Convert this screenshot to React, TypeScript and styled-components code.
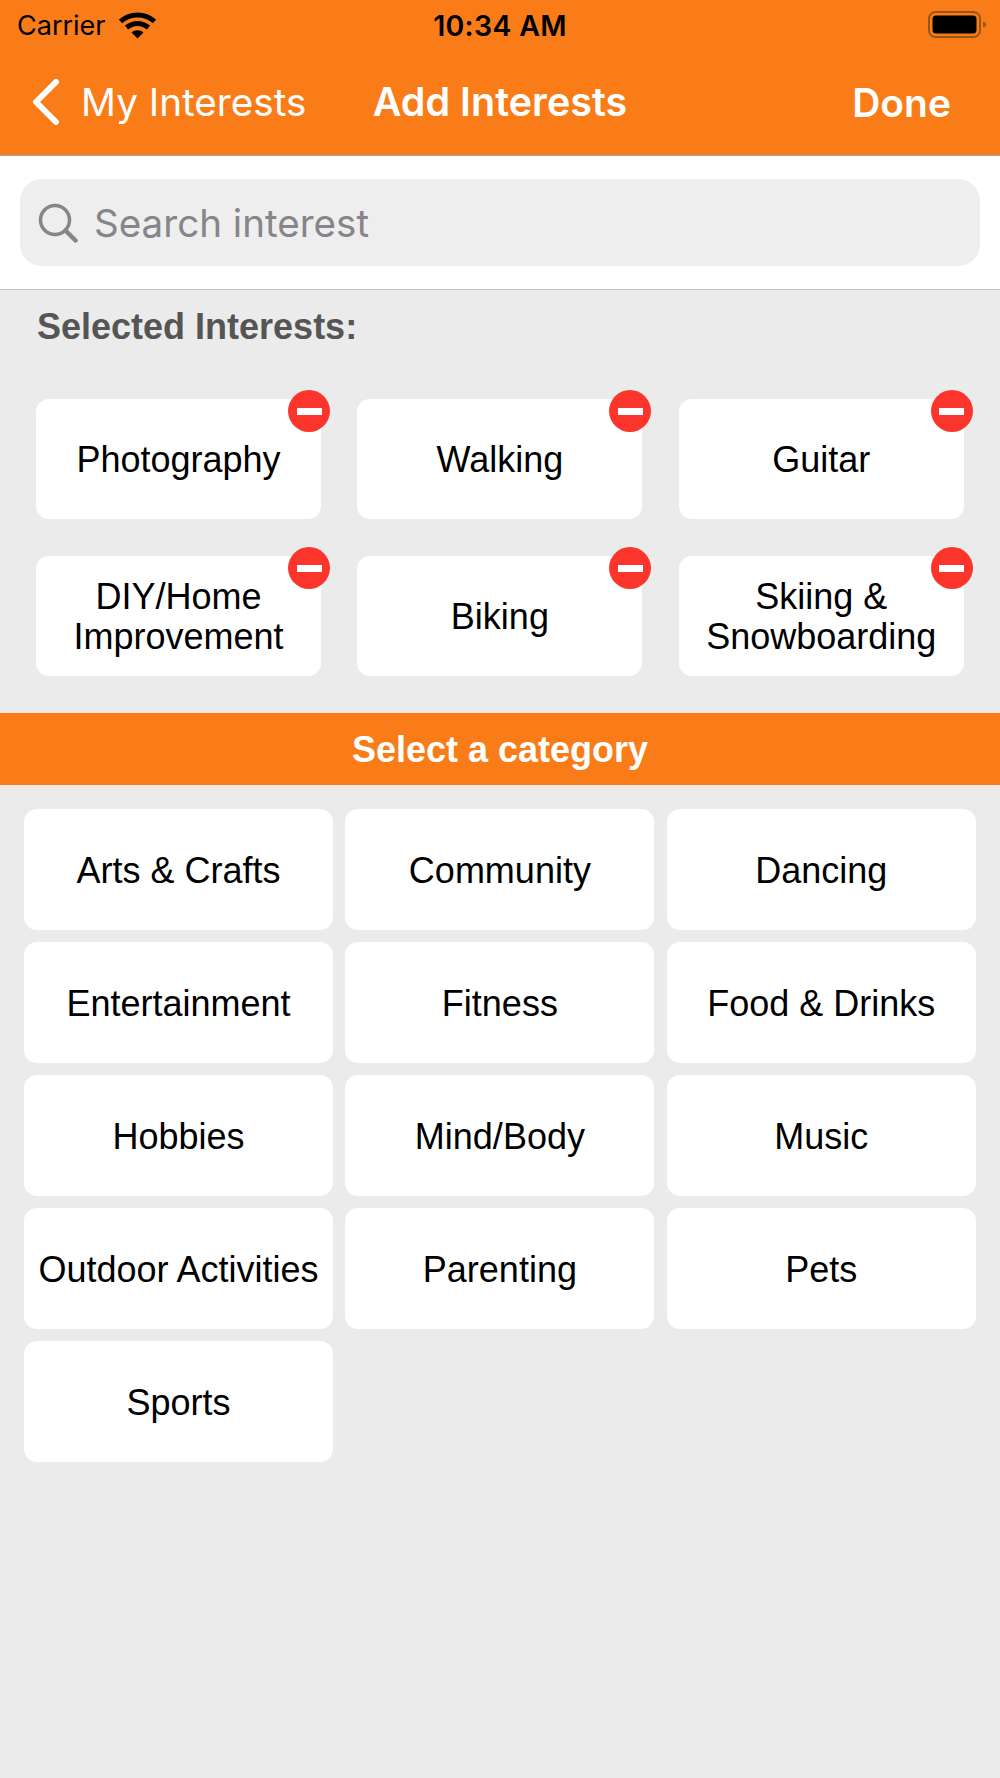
import React, { FC } from "react";
import styled, { createGlobalStyle } from "styled-components";

const GlobalStyle = createGlobalStyle`
  html, body {
    margin: 0;
    padding: 0;
    background: #ebebeb;
  }
  * {
    box-sizing: border-box;
  }
`;

const Page = styled.div`
  width: 1000px;
  height: 1778px;
  overflow: hidden;
  background: #ebebeb;
  font-family: "Liberation Sans", Arial, sans-serif;
  color: #000;
`;

const Header = styled.header`
  height: 156px;
  background: #f97c18;
  border-bottom: 1px solid #b0a79f;
  font-family: Inter, "Noto Sans", sans-serif;
`;

const StatusBar = styled.div`
  height: 50px;
  padding: 0 12px;
  display: grid;
  grid-template-columns: 1fr auto 1fr;
  align-items: center;
  font-size: 27px;
`;

const StatusLeft = styled.div`
  padding-left: 5px;
  display: flex;
  align-items: center;
  gap: 13px;
`;

const Clock = styled.div`
  font-size: 28.500px;
  font-weight: 600;
  letter-spacing: 0.3px;
`;

const StatusRight = styled.div`
  display: flex;
  justify-content: flex-end;
`;

const NavBar = styled.nav`
  height: 104px;
  padding: 0 32px;
  display: grid;
  grid-template-columns: 1fr auto 1fr;
  align-items: center;
  color: #fff;
  font-size: 38.700px;
`;

const BackLink = styled.div`
  display: flex;
  align-items: center;
  gap: 21px;
`;

const Title = styled.div`
  font-size: 39.500px;
  font-weight: 600;
`;

const DoneLink = styled.div`
  padding-right: 17px;
  font-size: 39px;
  font-weight: 600;
  text-align: right;
`;

const SearchSection = styled.div`
  height: 134px;
  padding: 23px 20px 0;
  background: #fff;
  border-bottom: 1px solid #c4c4c4;
`;

const SearchBox = styled.div`
  height: 87px;
  padding: 0 18px;
  border-radius: 22px;
  background: #eeeeee;
  display: flex;
  align-items: center;
  gap: 16px;
  color: #85858a;
  font-family: Inter, "Noto Sans", sans-serif;
  font-size: 38.600px;
`;

const SearchText = styled.span`
  padding-top: 1px;
`;

const SectionLabel = styled.div`
  padding: 17px 0 0 37px;
  height: 109px;
  color: #555555;
  font-size: 36px;
  font-weight: 700;
  line-height: 39px;
`;

const SelectedGrid = styled.div`
  padding: 0 36px;
  display: grid;
  grid-template-columns: repeat(3, 285px);
  grid-auto-rows: 120px;
  column-gap: 36.400px;
  row-gap: 37px;
`;

const Tile = styled.div`
  position: relative;
  padding-top: 2px;
  background: #fff;
  border-radius: 13px;
  display: flex;
  align-items: center;
  justify-content: center;
  text-align: center;
  font-size: 36px;
  line-height: 40px;
`;

const RemoveBadge = styled.span`
  position: absolute;
  top: -9px;
  right: -9px;
  width: 42px;
  height: 42px;
  border-radius: 50%;
  background: #fb352c;
  display: flex;
  align-items: center;
  justify-content: center;

  &::before {
    content: "";
    width: 25px;
    height: 7px;
    background: #fff;
  }
`;

const CategoryBanner = styled.div`
  height: 72px;
  margin-top: 37px;
  padding-top: 2px;
  background: #f97c18;
  color: #fff;
  font-size: 36px;
  font-weight: 700;
  display: flex;
  align-items: center;
  justify-content: center;
`;

const CategoryGrid = styled.div`
  padding: 24px 24px 0;
  display: grid;
  grid-template-columns: repeat(3, 309px);
  grid-auto-rows: 121px;
  row-gap: 12px;
  column-gap: 12.400px;
`;

const WifiIcon: FC = () => (
  <svg width="37" height="27" viewBox="0 0 37 27" fill="none">
    <path d="M1.5 9.5C11 .8 26 .8 35.5 9.5" stroke="#000" strokeWidth="5" />
    <path d="M7.5 15.5c6.500-5.500 15.500-5.500 22 0" stroke="#000" strokeWidth="5" />
    <path d="M12.500 20.500 18.500 26.500 24.500 20.500C21 17.500 16 17.500 12.500 20.500Z" fill="#000" />
  </svg>
);

const BatteryIcon: FC = () => (
  <svg width="60" height="28" viewBox="0 0 60 28" fill="none">
    <rect x="1" y="1" width="51" height="25" rx="6.500" stroke="#9a5518" strokeWidth="2" />
    <rect x="4.500" y="4.500" width="44" height="18" rx="3.500" fill="#000" />
    <path d="M55 10.500c2 .5 3 1.500 3 3s-1 2.500-3 3Z" fill="#9a5518" />
  </svg>
);

const BackChevron: FC = () => (
  <svg width="28" height="46" viewBox="0 0 28 46" fill="none">
    <path
      d="M24 3 4 23l20 20"
      stroke="#fff"
      strokeWidth="6"
      strokeLinecap="round"
      strokeLinejoin="round"
    />
  </svg>
);

const SearchIcon: FC = () => (
  <svg width="40" height="40" viewBox="0 0 40 40" fill="none">
    <circle cx="17" cy="17" r="14.500" stroke="#85858a" strokeWidth="3.500" />
    <path d="m27.500 27.500 10 10" stroke="#85858a" strokeWidth="4.500" strokeLinecap="round" />
  </svg>
);

const selected = [
  "Photography",
  "Walking",
  "Guitar",
  "DIY/Home Improvement",
  "Biking",
  "Skiing & Snowboarding",
];

const categories = [
  "Arts & Crafts",
  "Community",
  "Dancing",
  "Entertainment",
  "Fitness",
  "Food & Drinks",
  "Hobbies",
  "Mind/Body",
  "Music",
  "Outdoor Activities",
  "Parenting",
  "Pets",
  "Sports",
];

const App: FC = () => {
  return (
    <Page>
      <GlobalStyle />
      <Header>
        <StatusBar>
          <StatusLeft>
            Carrier
            <WifiIcon />
          </StatusLeft>
          <Clock>10:34 AM</Clock>
          <StatusRight>
            <BatteryIcon />
          </StatusRight>
        </StatusBar>
        <NavBar>
          <BackLink>
            <BackChevron />
            My Interests
          </BackLink>
          <Title>Add Interests</Title>
          <DoneLink>Done</DoneLink>
        </NavBar>
      </Header>
      <SearchSection>
        <SearchBox>
          <SearchIcon />
          <SearchText>Search interest</SearchText>
        </SearchBox>
      </SearchSection>
      <SectionLabel>Selected Interests:</SectionLabel>
      <SelectedGrid>
        {selected.map((name) => (
          <Tile key={name}>
            {name}
            <RemoveBadge />
          </Tile>
        ))}
      </SelectedGrid>
      <CategoryBanner>Select a category</CategoryBanner>
      <CategoryGrid>
        {categories.map((name) => (
          <Tile key={name}>{name}</Tile>
        ))}
      </CategoryGrid>
    </Page>
  );
};

export default App;
